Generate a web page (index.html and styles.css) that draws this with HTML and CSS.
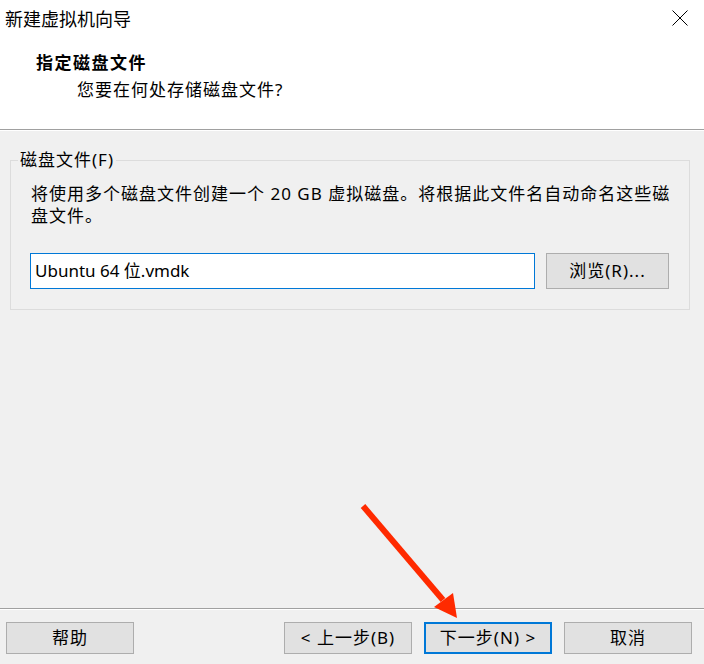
FILE: index.html
```html
<!DOCTYPE html>
<html lang="zh-CN">
<head>
<meta charset="utf-8">
<title>新建虚拟机向导</title>
<link rel="stylesheet" href="styles.css">
</head>
<body>
<div class="window">
  <div class="top">
    <div class="titlebar">
      <span class="title">新建虚拟机向导</span>
      <svg class="close" width="16" height="16" viewBox="0 0 16 16" aria-hidden="true">
        <path d="M0.5 0.5 L15.5 15.5 M15.5 0.5 L0.5 15.5" stroke="#000" stroke-width="1" fill="none"/>
      </svg>
    </div>
    <div class="heading">
      <div class="h-title">指定磁盘文件</div>
      <div class="h-sub">您要在何处存储磁盘文件?</div>
    </div>
  </div>

  <div class="content">
    <fieldset class="group">
      <legend class="legend">磁盘文件(F)</legend>
      <p class="desc">将使用多个磁盘文件创建一个 20 GB 虚拟磁盘。将根据此文件名自动命名这些磁盘文件。</p>
      <div class="file-row">
        <div class="input">Ubuntu 64 位.vmdk</div>
        <div class="btn browse">浏览(R)...</div>
      </div>
    </fieldset>
  </div>

  <div class="footer">
    <div class="btn">帮助</div>
    <div class="spacer"></div>
    <div class="btn">&lt; 上一步(B)</div>
    <div class="btn primary">下一步(N) &gt;</div>
    <div class="btn">取消</div>
  </div>

  <svg class="arrow" width="704" height="664" viewBox="0 0 704 664" aria-hidden="true">
    <line x1="363" y1="506" x2="443" y2="600" stroke="#ff2a00" stroke-width="6" stroke-linecap="butt"/>
    <polygon points="457,618 434,607 453,593" fill="#ff2a00"/>
  </svg>
</div>
</body>
</html>
```

FILE: styles.css
```css
* { box-sizing: border-box; }

html, body {
  margin: 0;
  padding: 0;
}

body {
  width: 704px;
  height: 664px;
  overflow: hidden;
  font-family: "Noto Sans", "Noto Sans CJK SC", sans-serif;
  font-size: 17px;
  color: #000;
  background: #f0f0f0;
}

.window {
  position: relative;
  width: 704px;
  height: 664px;
  display: flex;
  flex-direction: column;
}

.top {
  background: #fff;
  height: 130px;
  border-bottom: 1px solid #a0a0a0;
}

.titlebar {
  height: 35px;
  display: flex;
  align-items: center;
  justify-content: space-between;
  padding: 0 16px 0 5px;
}

.title {
  font-family: "Noto Sans CJK SC", sans-serif;
  font-size: 18px;
  line-height: 22px;
}

.close { display: block; }

.heading {
  padding: 16px 0 0 36px;
}

.h-title {
  font-family: "Noto Sans CJK SC", sans-serif;
  font-weight: 700;
  font-size: 17px;
  letter-spacing: 1.5px;
  line-height: 22px;
}

.h-sub {
  margin-top: 6px;
  padding-left: 41px;
  font-size: 17px;
  letter-spacing: 1px;
  line-height: 22px;
}

.content {
  flex: 1;
  padding: 18px 14px 0 10px;
  border-top: 1px solid #fff;
}

.group {
  margin: 0;
  padding: 0 14px 20px 19px;
  border: 1px solid #dcdcdc;
  width: 680px;
  min-width: 0;
}

.legend {
  margin-left: -12px;
  padding: 0 2px;
  line-height: 22px;
  letter-spacing: 1px;
}

.desc {
  margin: 12px 0 0 1px;
  width: 644px;
  line-height: 22px;
  letter-spacing: 1px;
}

.file-row {
  margin-top: 26px;
  display: flex;
  gap: 11px;
}

.input {
  width: 505px;
  height: 36px;
  background: #fff;
  border: 1px solid #0078d7;
  padding: 0 4px;
  display: flex;
  align-items: center;
  line-height: 22px;
}

.btn {
  width: 128px;
  height: 32px;
  background: #e1e1e1;
  border: 1px solid #adadad;
  display: flex;
  align-items: center;
  justify-content: center;
  line-height: 22px;
  letter-spacing: 1px;
}

.browse {
  width: 123px;
  height: 36px;
}

.footer {
  height: 56px;
  border-top: 1px solid #a0a0a0;
  box-shadow: inset 0 1px 0 #fff;
  display: flex;
  align-items: flex-start;
  gap: 12px;
  padding: 13px 12px 0 6px;
}

.spacer { flex: 1; }

.btn.primary {
  border: 2px solid #0078d7;
}

.arrow {
  position: absolute;
  left: 0;
  top: 0;
  pointer-events: none;
}
```
